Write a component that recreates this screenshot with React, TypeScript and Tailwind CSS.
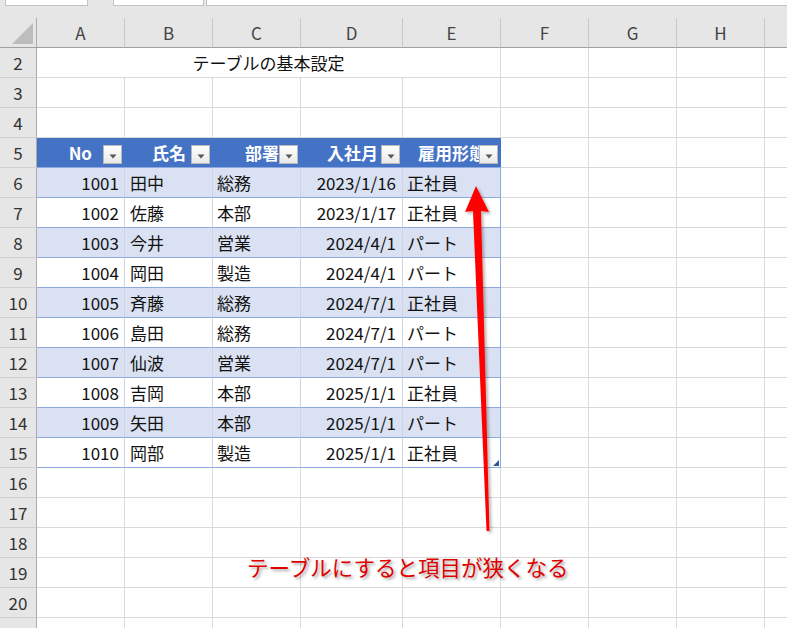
import React from "react";

const font = { fontFamily: '"Noto Sans CJK JP", "Noto Sans", sans-serif' };

const letters = ["A", "B", "C", "D", "E", "F", "G", "H", ""];

const rows = [
  ["1001", "田中", "総務", "2023/1/16", "正社員"],
  ["1002", "佐藤", "本部", "2023/1/17", "正社員"],
  ["1003", "今井", "営業", "2024/4/1", "パート"],
  ["1004", "岡田", "製造", "2024/4/1", "パート"],
  ["1005", "斉藤", "総務", "2024/7/1", "正社員"],
  ["1006", "島田", "総務", "2024/7/1", "パート"],
  ["1007", "仙波", "営業", "2024/7/1", "パート"],
  ["1008", "吉岡", "本部", "2025/1/1", "正社員"],
  ["1009", "矢田", "本部", "2025/1/1", "パート"],
  ["1010", "岡部", "製造", "2025/1/1", "正社員"],
];

const RowHead = ({ n }: { n: number }) => (
  <div className="h-[30px] flex items-center justify-center bg-[#e6e6e6] border-r border-r-[#ababab] border-b border-b-[#d0d0d0] text-[17px] leading-none text-[#333]">
    {n}
  </div>
);

const Empty = () => <div className="h-[30px] border-r border-b border-[#d9d9d9] bg-white" />;

const FilterButton = () => (
  <div className="absolute right-[3px] top-[7px] w-[19px] h-[19px] border border-[#b9b9b9] bg-gradient-to-b from-white to-[#e9e9e9] flex items-center justify-center">
    <svg width="8" height="5" viewBox="0 0 8 5" className="mt-[3px]">
      <polygon points="0.5,0.5 7.5,0.5 4,4.5" fill="#555" />
    </svg>
  </div>
);

const headers: { label: string; cls: string }[] = [
  { label: "No", cls: "justify-end pr-[33px]" },
  { label: "氏名", cls: "justify-end pr-[27px]" },
  { label: "部署", cls: "justify-end pr-[22px]" },
  { label: "入社月", cls: "justify-end pr-[25px]" },
  { label: "雇用形態", cls: "justify-start pl-[15px]" },
];

const align = [
  "justify-end pr-[5px]",
  "justify-start pl-[5px]",
  "justify-start pl-[4px]",
  "justify-end pr-[6px]",
  "justify-start pl-[4px]",
];

export default function App() {
  return (
    <div className="relative w-[787px] h-[628px] overflow-hidden bg-white text-[#111]" style={font}>
      {/* formula bar strip */}
      <div className="h-[18px] bg-[#e6e6e6] flex items-start">
        <div className="ml-[5px] w-[83px] h-[6px] bg-white border-x border-b border-[#c4c4c4]" />
        <div className="ml-[25px] w-[91px] h-[6px] bg-white border-x border-b border-[#c4c4c4]" />
        <div className="ml-[2px] flex-1 h-[6px] bg-white border-l border-b border-[#c4c4c4]" />
      </div>

      <div className="grid grid-cols-[37px_88px_88px_88px_102px_98px_88px_88px_88px_88px]">
        {/* column headers */}
        <div className="relative h-[30px] bg-[#e6e6e6] border-r border-r-[#ababab] border-b border-b-[#9f9f9f]">
          <svg width="22" height="22" viewBox="0 0 22 22" className="absolute left-[11px] top-[5px]">
            <polygon points="22,0 22,21 1,21" fill="#bdbdbd" />
          </svg>
        </div>
        {letters.map((l, i) => (
          <div
            key={i}
            className="h-[30px] flex items-center justify-center bg-[#e6e6e6] border-r border-r-[#c8c8c8] border-b border-b-[#9f9f9f] text-[17px] leading-none text-[#444]"
          >
            {l}
          </div>
        ))}

        {/* row 2 */}
        <RowHead n={2} />
        <div className="col-span-5 h-[30px] flex items-center justify-center border-r border-b border-[#d9d9d9] text-[17px] leading-none">
          テーブルの基本設定
        </div>
        {[0, 1, 2, 3].map((i) => (
          <Empty key={i} />
        ))}

        {/* rows 3-4 */}
        {[3, 4].map((n) => (
          <React.Fragment key={n}>
            <RowHead n={n} />
            {Array.from({ length: 9 }).map((_, i) => (
              <Empty key={i} />
            ))}
          </React.Fragment>
        ))}

        {/* row 5: table header */}
        <RowHead n={5} />
        {headers.map((h) => (
          <div
            key={h.label}
            className={`relative h-[30px] flex items-center overflow-hidden whitespace-nowrap bg-[#4472c4] border-b border-b-[#8ea9db] text-white font-bold text-[17px] leading-none ${h.cls}`}
          >
            {h.label}
            <FilterButton />
          </div>
        ))}
        {[0, 1, 2, 3].map((i) => (
          <Empty key={i} />
        ))}

        {/* rows 6-15: data */}
        {rows.map((r, ri) => {
          const band = ri % 2 === 0;
          return (
            <React.Fragment key={r[0]}>
              <RowHead n={ri + 6} />
              {r.map((v, ci) => (
                <div
                  key={ci}
                  className={`relative h-[30px] flex items-center whitespace-nowrap text-[17px] leading-none border-b border-b-[#8ea9db] border-r ${
                    ci === 4 ? "border-r-[#8ea9db]" : "border-r-[#cdd4e2]"
                  } ${band ? "bg-[#d9e1f2]" : "bg-white"} ${align[ci]}`}
                >
                  {v}
                  {ri === 9 && ci === 4 && (
                    <svg width="6" height="6" viewBox="0 0 6 6" className="absolute right-[1px] bottom-[1px]">
                      <polygon points="6,0 6,6 0,6" fill="#2f5597" />
                    </svg>
                  )}
                </div>
              ))}
              {[0, 1, 2, 3].map((i) => (
                <Empty key={i} />
              ))}
            </React.Fragment>
          );
        })}

        {/* rows 16-21 */}
        {[16, 17, 18, 19, 20, 21].map((n) => (
          <React.Fragment key={n}>
            <RowHead n={n} />
            {Array.from({ length: 9 }).map((_, i) => (
              <Empty key={i} />
            ))}
          </React.Fragment>
        ))}
      </div>

      {/* red arrow */}
      <svg width="787" height="628" viewBox="0 0 787 628" className="absolute left-0 top-0 pointer-events-none">
        <defs>
          <filter id="sh" x="-50%" y="-10%" width="200%" height="120%">
            <feDropShadow dx="2" dy="2" stdDeviation="1.5" floodColor="#000" floodOpacity="0.3" />
          </filter>
        </defs>
        <polygon
          points="476,186 489,212 481,211 489.5,531 486.5,531 473,211 465,212"
          fill="#ff0000"
          filter="url(#sh)"
        />
      </svg>

      {/* annotation */}
      <div className="absolute left-[247px] top-[556px] text-[21.5px] leading-none whitespace-nowrap text-[#e00000] [text-shadow:2px_2px_3px_rgba(0,0,0,0.35)]">
        テーブルにすると項目が狭くなる
      </div>
    </div>
  );
}
